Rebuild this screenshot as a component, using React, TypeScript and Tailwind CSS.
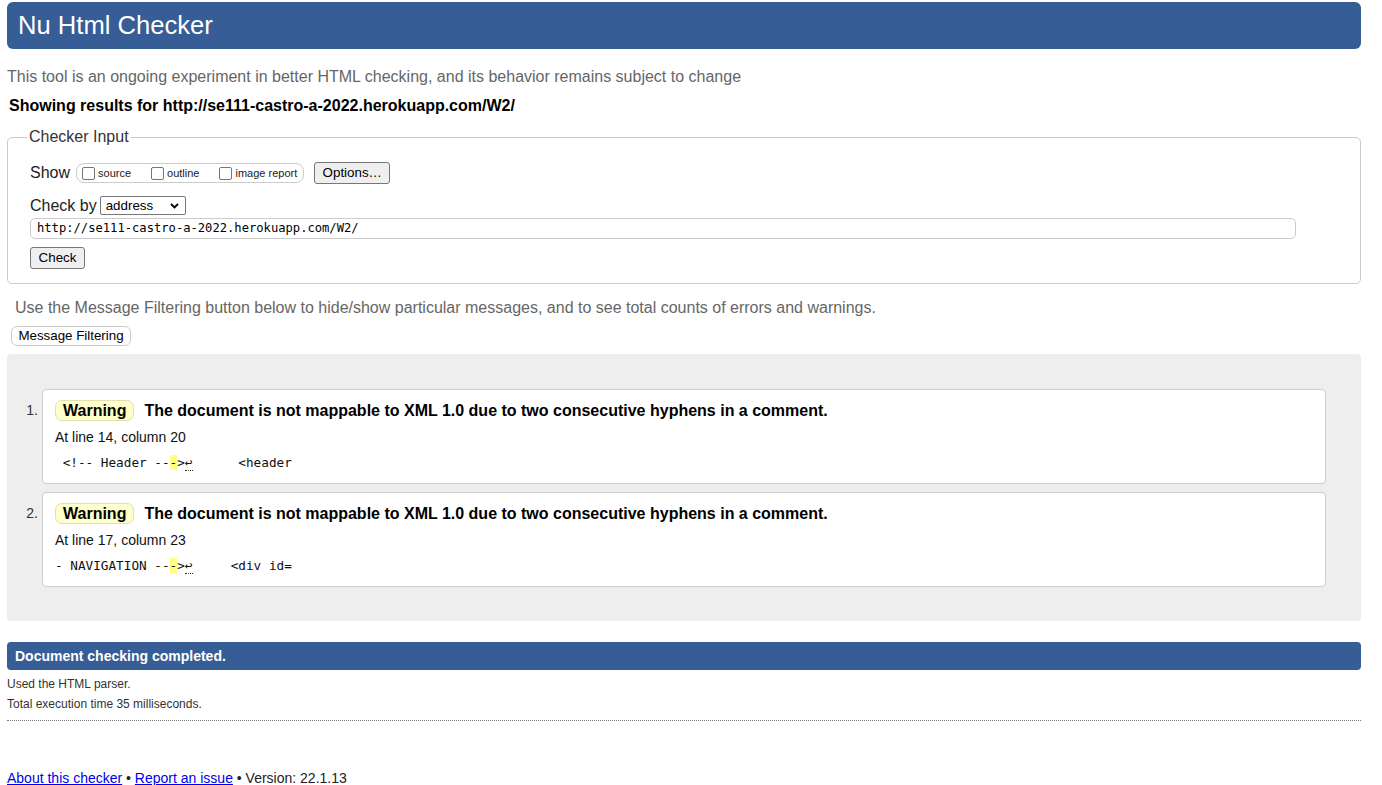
function Box({ className = "" }: { className?: string }) {
  return (
    <span
      className={`inline-block h-[13px] w-[13px] shrink-0 rounded-[2px] border border-[#767676] bg-white ${className}`}
    />
  );
}

type Msg = { n: number; line: string; pre: string; post: string; tail: string };

const messages: Msg[] = [
  { n: 1, line: "At line 14, column 20", pre: " <!-- Header --", post: ">", tail: "      <header" },
  { n: 2, line: "At line 17, column 23", pre: "- NAVIGATION --", post: ">", tail: "     <div id=" },
];

export default function App() {
  return (
    <div className="min-h-[785px] bg-white pl-[7px] pr-[21px] pt-[2px] font-['Liberation_Sans',Arial,sans-serif] text-[#222]">
      <h1 className="flex h-[47px] items-center rounded-[6px] bg-[#365d95] pl-[11px] text-[25.6px] font-normal leading-none text-white">
        Nu Html Checker
      </h1>
      <p className="mt-[19px] text-[16px] leading-[18px] text-[#666]">
        This tool is an ongoing experiment in better HTML checking, and its behavior remains subject to change
      </p>
      <p className="mt-[11px] pl-[2px] text-[16px] font-bold leading-[18px] text-black">
        Showing results for http://se111-castro-a-2022.herokuapp.com/W2/
      </p>

      <fieldset className="mt-[13px] rounded-[5px] border border-[#ccc] pb-[14px] pl-[19px]">
        <legend className="px-[2px] text-[16px] leading-[18px] text-[#333]">Checker Input</legend>
        <div className="pl-[3px]">
          <div className="mt-[16px] flex h-[22px] items-center">
            <span className="text-[16px] leading-[18px]">Show</span>
            <div className="ml-[6px] flex h-[20px] items-center rounded-[8px] border border-[#ccc] pl-[5px] pr-[6px] text-[11px] leading-[13px]">
              <Box />
              <span className="ml-[3px]">source</span>
              <Box className="ml-[20px]" />
              <span className="ml-[3px]">outline</span>
              <Box className="ml-[20px]" />
              <span className="ml-[3px]">image report</span>
            </div>
            <button className="ml-[10px] h-[22px] w-[76px] rounded-[3px] border border-[#767676] bg-[#efefef] text-[13.33px] leading-none text-black">
              Options…
            </button>
          </div>
          <div className="mt-[12px] flex h-[19px] items-center">
            <span className="text-[16px] leading-[18px]">Check by</span>
            <div className="ml-[3px] flex h-[19px] w-[86px] items-center justify-between rounded-[2px] border border-[#767676] bg-white pl-[5px] pr-[6px] text-[13.33px] leading-none text-black">
              <span>address</span>
              <svg width="9" height="6" viewBox="0 0 9 6" fill="none">
                <path d="M1 1 L4.5 4.5 L8 1" stroke="#000" strokeWidth="1.8" />
              </svg>
            </div>
          </div>
          <div className="mt-[3px] flex h-[21px] w-[1266px] items-center rounded-[5px] border border-[#ccc] pl-[6px] font-['DejaVu_Sans_Mono',monospace] text-[12.15px] leading-none text-black">
            http://se111-castro-a-2022.herokuapp.com/W2/
          </div>
          <button className="mt-[8px] block h-[22px] w-[55px] rounded-[3px] border border-[#767676] bg-[#efefef] text-[13.33px] leading-none text-black">
            Check
          </button>
        </div>
      </fieldset>

      <p className="mt-[15px] pl-[8px] text-[16px] leading-[18px] text-[#666]">
        Use the Message Filtering button below to hide/show particular messages, and to see total counts of errors and warnings.
      </p>
      <button className="ml-[4px] mt-[9px] block h-[20px] w-[120px] rounded-[6px] border border-[#ccc] bg-white text-[13.33px] leading-none text-black">
        Message Filtering
      </button>

      <div className="mt-[8px] flex flex-col gap-[8px] rounded-[4px] bg-[#eee] pb-[34px] pt-[35px]">
        {messages.map((m) => (
          <div key={m.n} className="flex">
            <div className="w-[35px] shrink-0 pr-[4px] pt-[13px] text-right text-[14px] leading-[16px] text-[#333]">
              {m.n}.
            </div>
            <div className="w-[1284px] rounded-[4px] border border-[#ccc] bg-white pb-[12px] pl-[12px] pt-[10px]">
              <div className="flex h-[21px] items-center">
                <span className="flex h-[21px] items-center rounded-[7px] border border-[#e4dfae] bg-[#ffffcc] px-[7px] text-[16px] font-bold leading-none text-black">
                  Warning
                </span>
                <span className="ml-[10px] text-[16px] font-bold leading-none text-black">
                  The document is not mappable to XML 1.0 due to two consecutive hyphens in a comment.
                </span>
              </div>
              <p className="mt-[8px] text-[14px] leading-[16px] text-[#111]">{m.line}</p>
              <p className="mt-[10px] h-[16px] whitespace-pre font-['DejaVu_Sans_Mono',monospace] text-[12.7px] leading-[16px] text-[#111]">
                {m.pre}
                <mark className="bg-[#ffff80] text-[#111]">-</mark>
                {m.post}
                <span className="border-b border-dotted border-[#333]">↩</span>
                {m.tail}
              </p>
            </div>
          </div>
        ))}
      </div>

      <div className="mt-[21px] flex h-[28px] items-center rounded-[4px] bg-[#365d95] pl-[8px] text-[14px] font-bold leading-none text-white">
        Document checking completed.
      </div>
      <p className="mt-[7px] text-[12px] leading-[14px] text-[#333]">Used the HTML parser.</p>
      <p className="mt-[6px] text-[12px] leading-[14px] text-[#333]">Total execution time 35 milliseconds.</p>
      <div className="mt-[9px] border-t border-dotted border-[#777]" />

      <p className="mt-[49px] text-[14px] leading-[16px] text-[#222]">
        <a href="#" className="text-[#0000ee] underline">
          About this checker
        </a>
        {" • "}
        <a href="#" className="text-[#0000ee] underline">
          Report an issue
        </a>
        {" • Version: 22.1.13"}
      </p>
    </div>
  );
}
